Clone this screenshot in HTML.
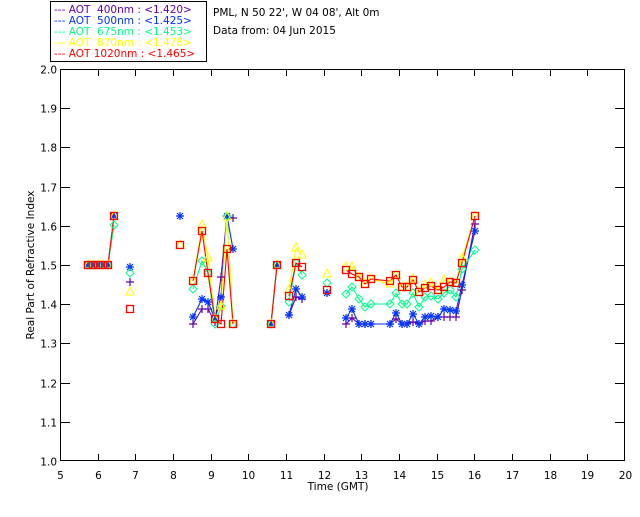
<!DOCTYPE html>
<html><head><style>
body{margin:0;background:#fff;width:640px;height:512px;overflow:hidden}
svg text{font-family:"DejaVu Sans","Liberation Sans",sans-serif;font-size:10.5px}
</style></head><body>
<svg id="s" width="640" height="512" xmlns="http://www.w3.org/2000/svg">
<rect x="50.5" y="1.5" width="156" height="60" fill="none" stroke="#000" stroke-width="1"/>
<g>
<text x="54" y="13" fill="#6600aa">--- AOT&#160; 400nm : &lt;1.420&gt;</text>
<text x="54" y="24" fill="#0033ff">--- AOT&#160; 500nm : &lt;1.425&gt;</text>
<text x="54" y="35" fill="#00ff88">--- AOT&#160; 675nm : &lt;1.453&gt;</text>
<text x="54" y="46" fill="#ffff00">--- AOT&#160; 870nm : &lt;1.478&gt;</text>
<text x="54" y="57" fill="#ff0000">--- AOT 1020nm : &lt;1.465&gt;</text>
<text x="213" y="16" fill="#000">PML, N 50 22', W 04 08', Alt 0m</text>
<text x="213" y="34" fill="#000">Data from: 04 Jun 2015</text>
<text x="338" y="490" text-anchor="middle" fill="#000">Time (GMT)</text>
<text transform="translate(34,265) rotate(-90)" text-anchor="middle" fill="#000">Real Part of Refractive Index</text>
</g>
<rect x="60.5" y="69.5" width="564" height="391" fill="none" stroke="#000"/>
<g id="ax" stroke="#000"></g>
<g id="lb" fill="#000"></g>
<g id="d"></g>
</svg>
<script>
var NS="http://www.w3.org/2000/svg";
function el(p,t,a,txt){var e=document.createElementNS(NS,t);for(var k in a)e.setAttribute(k,a[k]);if(txt!=null)e.textContent=txt;p.appendChild(e);return e;}
var ax=document.getElementById('ax'),lb=document.getElementById('lb'),d=document.getElementById('d');
for(var i=0;i<=10;i++){var y=461-i*39.2;y=Math.round(y)+0.5;
 if(i>0&&i<10){el(ax,'line',{x1:60,y1:y,x2:70,y2:y});el(ax,'line',{x1:615,y1:y,x2:625,y2:y});}
 el(lb,'text',{x:57,y:y+4,'text-anchor':'end'},(1+i/10).toFixed(1));}
for(var t=5;t<=20;t++){var x=Math.round(60+(t-5)*37.67)+0.5;
 if(t>5&&t<20){el(ax,'line',{x1:x,y1:461,x2:x,y2:454});el(ax,'line',{x1:x,y1:69,x2:x,y2:76});}
 el(lb,'text',{x:x,y:479,'text-anchor':'middle'},String(t));}
var br=[130,180,193,271,289,327,346];
function base(){return [[88,265],[93,265],[98,265],[103,265],[108,265],[114,216]];}
var red=base().concat([[130,309],[180,245],[193,281],[202,231],[208,273],[215,319],[221,324],[227,249],[233,324],[271,324],[277,265],[289,296],[296,263],[302,267],[327,290],[346,270],[352,274],[359,277],[365,284],[371,279],[390,281],[396,275],[402,287],[407,287],[413,280],[419,292],[425,288],[431,286],[438,290],[444,287],[450,282],[456,283],[462,263],[475,216]]);
var yel=base().concat([[130,292],[180,245],[193,281],[202,225],[208,258],[215,319],[221,306],[227,217],[233,324],[271,324],[277,265],[289,290],[296,248],[302,255],[327,274],[346,267],[352,267],[359,277],[365,284],[371,279],[390,284],[396,275],[402,287],[407,287],[413,279],[419,292],[425,285],[431,283],[438,290],[444,280],[450,282],[456,283],[462,258],[475,216]]);
var cya=base().slice(0,5).concat([[114,225],[130,273],[193,289],[202,261],[208,273],[215,324],[221,306],[227,216],[233,324],[271,324],[277,265],[289,302],[296,263],[302,275],[327,283],[346,294],[352,287],[359,299],[365,307],[371,304],[390,304],[396,293],[402,304],[407,304],[413,293],[419,307],[425,297],[431,296],[438,299],[444,293],[450,290],[456,297],[462,269],[475,250]]);
var blu=base().concat([[130,267],[180,216],[193,317],[202,299],[208,302],[215,319],[221,297],[227,216],[233,249],[271,324],[277,265],[289,315],[296,289],[302,297],[327,293],[346,318],[352,309],[359,324],[365,324],[371,324],[390,324],[396,313],[402,324],[407,324],[413,314],[419,324],[425,317],[431,316],[438,317],[444,309],[450,310],[456,311],[462,285],[475,231]]);
var pur=base().concat([[130,282],[193,324],[202,309],[208,309],[215,322],[221,277],[227,216],[233,218],[271,324],[277,265],[289,315],[296,297],[302,299],[327,293],[346,324],[352,318],[359,324],[365,324],[371,324],[390,324],[396,319],[402,324],[407,324],[413,322],[419,324],[425,321],[431,321],[438,317],[444,317],[450,317],[456,317],[462,290],[475,224]]);
function line(pts,c){var s='';for(var i=0;i<pts.length;i++){var p=pts[i];s+=(i==0||br.indexOf(p[0])>=0?'M':'L')+p[0]+' '+p[1];}
 el(d,'path',{d:s,fill:'none',stroke:c,'stroke-width':1.1});}
function mk(pts,c,type){pts.forEach(function(p){var x=p[0],y=p[1];
 if(type=='sq')el(d,'rect',{x:x-3.5,y:y-3.5,width:7,height:7,fill:'none',stroke:c,'stroke-width':1.3});
 else if(type=='tri')el(d,'path',{d:'M'+x+' '+(y-5)+'L'+(x+4)+' '+(y+3)+'L'+(x-4)+' '+(y+3)+'Z',fill:'none',stroke:c});
 else if(type=='dia')el(d,'path',{d:'M'+x+' '+(y-4)+'L'+(x+4)+' '+y+'L'+x+' '+(y+4)+'L'+(x-4)+' '+y+'Z',fill:'none',stroke:c});
 else if(type=='plus')el(d,'path',{d:'M'+(x-4)+' '+y+'H'+(x+4)+'M'+x+' '+(y-4)+'V'+(y+4),stroke:c,'stroke-width':1.2});
 else el(d,'path',{d:'M'+(x-4)+' '+y+'H'+(x+4)+'M'+x+' '+(y-4)+'V'+(y+4)+'M'+(x-3)+' '+(y-3)+'L'+(x+3)+' '+(y+3)+'M'+(x+3)+' '+(y-3)+'L'+(x-3)+' '+(y+3),stroke:c,'stroke-width':1.2});});}
var S=[[pur,'#6600aa','plus'],[blu,'#0033ff','ast'],[cya,'#00ff88','dia'],[yel,'#ffff00','tri'],[red,'#ff0000','sq']];
S.forEach(function(s){line(s[0],s[1]);});
S.forEach(function(s){mk(s[0],s[1],s[2]);});
</script>
</body></html>
